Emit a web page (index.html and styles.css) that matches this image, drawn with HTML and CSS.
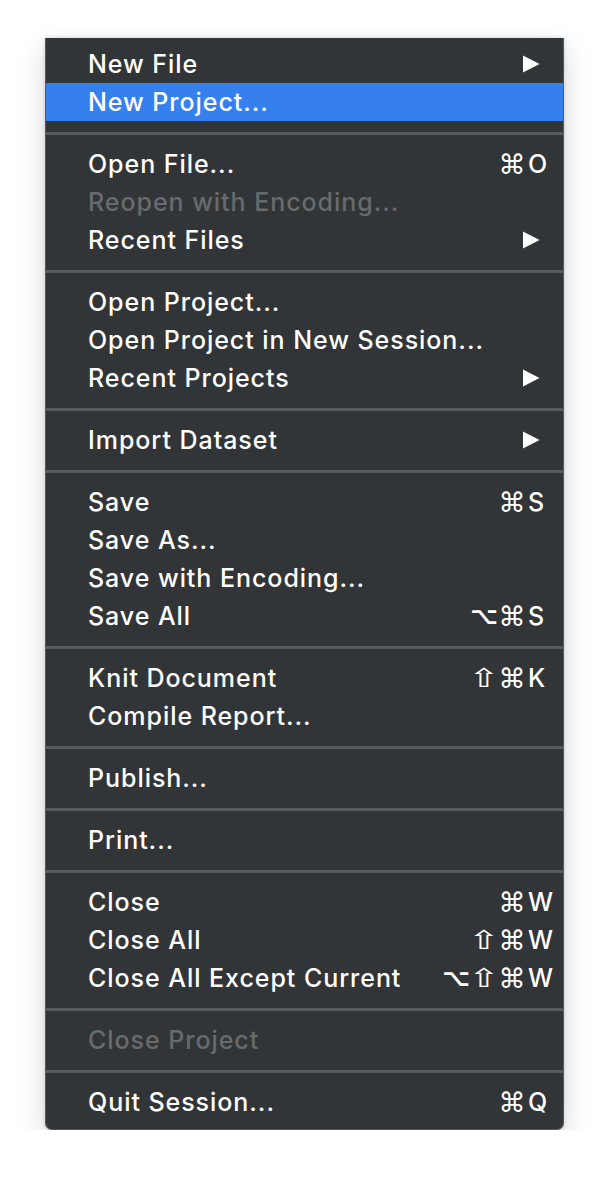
FILE: index.html
```html
<!DOCTYPE html>
<html>
<head>
<meta charset="utf-8">
<link rel="stylesheet" href="styles.css">
</head>
<body>
<div class="menu">
  <div class="section">
    <div class="item"><span class="label">New File</span><svg class="arrow" width="18" height="18" viewBox="0 0 18 18"><path d="M1 0.5 L17.5 9 L1 17.5 Z" fill="#fff"/></svg></div>
    <div class="item active"><span class="label">New Project...</span></div>
  </div>
  <div class="sep"></div>
  <div class="section">
    <div class="item"><span class="label">Open File...</span><span class="mod">⌘</span><span class="key">O</span></div>
    <div class="item disabled"><span class="label">Reopen with Encoding...</span></div>
    <div class="item"><span class="label">Recent Files</span><svg class="arrow" width="18" height="18" viewBox="0 0 18 18"><path d="M1 0.5 L17.5 9 L1 17.5 Z" fill="#fff"/></svg></div>
  </div>
  <div class="sep"></div>
  <div class="section">
    <div class="item"><span class="label">Open Project...</span></div>
    <div class="item"><span class="label">Open Project in New Session...</span></div>
    <div class="item"><span class="label">Recent Projects</span><svg class="arrow" width="18" height="18" viewBox="0 0 18 18"><path d="M1 0.5 L17.5 9 L1 17.5 Z" fill="#fff"/></svg></div>
  </div>
  <div class="sep"></div>
  <div class="section">
    <div class="item"><span class="label">Import Dataset</span><svg class="arrow" width="18" height="18" viewBox="0 0 18 18"><path d="M1 0.5 L17.5 9 L1 17.5 Z" fill="#fff"/></svg></div>
  </div>
  <div class="sep"></div>
  <div class="section">
    <div class="item"><span class="label">Save</span><span class="mod">⌘</span><span class="key">S</span></div>
    <div class="item"><span class="label">Save As...</span></div>
    <div class="item"><span class="label">Save with Encoding...</span></div>
    <div class="item"><span class="label">Save All</span><span class="mod opt">⌥</span><span class="mod">⌘</span><span class="key">S</span></div>
  </div>
  <div class="sep"></div>
  <div class="section">
    <div class="item"><span class="label">Knit Document</span><span class="mod shift"><span class="glyph">⇧</span></span><span class="mod">⌘</span><span class="key">K</span></div>
    <div class="item"><span class="label">Compile Report...</span></div>
  </div>
  <div class="sep"></div>
  <div class="section">
    <div class="item"><span class="label">Publish...</span></div>
  </div>
  <div class="sep"></div>
  <div class="section">
    <div class="item"><span class="label">Print...</span></div>
  </div>
  <div class="sep"></div>
  <div class="section">
    <div class="item"><span class="label">Close</span><span class="mod">⌘</span><span class="key">W</span></div>
    <div class="item"><span class="label">Close All</span><span class="mod shift"><span class="glyph">⇧</span></span><span class="mod">⌘</span><span class="key">W</span></div>
    <div class="item"><span class="label">Close All Except Current</span><span class="mod opt">⌥</span><span class="mod shift"><span class="glyph">⇧</span></span><span class="mod">⌘</span><span class="key">W</span></div>
  </div>
  <div class="sep"></div>
  <div class="section">
    <div class="item disabled"><span class="label">Close Project</span></div>
  </div>
  <div class="sep"></div>
  <div class="section">
    <div class="item"><span class="label">Quit Session...</span><span class="mod">⌘</span><span class="key">Q</span></div>
  </div>
</div>
</body>
</html>
```
FILE: styles.css
```css
html, body {
  margin: 0;
  padding: 0;
  background: #ffffff;
}
body {
  padding-top: 38px;
  padding-left: 45px;
  font-family: Inter, "DejaVu Sans", sans-serif;
}
.menu {
  width: 517px;
  background: #323537;
  border: 1px solid #55595b;
  border-top: none;
  border-radius: 0 0 7px 7px;
  padding: 7px 0 8px;
  box-shadow: 0 10px 28px rgba(0, 0, 0, 0.16), 0 0 4px rgba(0, 0, 0, 0.14);
}
.section {
  display: flex;
  flex-direction: column;
}
.item {
  display: flex;
  align-items: center;
  height: 38px;
  padding: 0 10px 0 42px;
  color: #ffffff;
  font-size: 25px;
  font-weight: 500;
  letter-spacing: 0.95px;
}
.item.active {
  background: #3580ec;
}
.item.disabled {
  color: #686b6e;
}
.label {
  flex: 1;
  white-space: nowrap;
}
.mod {
  display: flex;
  justify-content: center;
  width: 28px;
  font-family: "DejaVu Sans", sans-serif;
  font-size: 27px;
  font-weight: 400;
  letter-spacing: 0;
  line-height: 1;
}
.mod.opt {
  font-size: 24px;
  font-weight: 700;
}
.mod.shift {
  font-size: 26px;
  font-weight: 400;
}
.glyph {
  display: inline-block;
  transform: scaleX(1.45);
}
.key {
  width: 25px;
  padding-left: 2px;
  letter-spacing: 0;
}
.arrow {
  margin-right: 13px;
}
.sep {
  height: 3px;
  background: #585b5d;
  margin: 11px 0 10px;
}
```
